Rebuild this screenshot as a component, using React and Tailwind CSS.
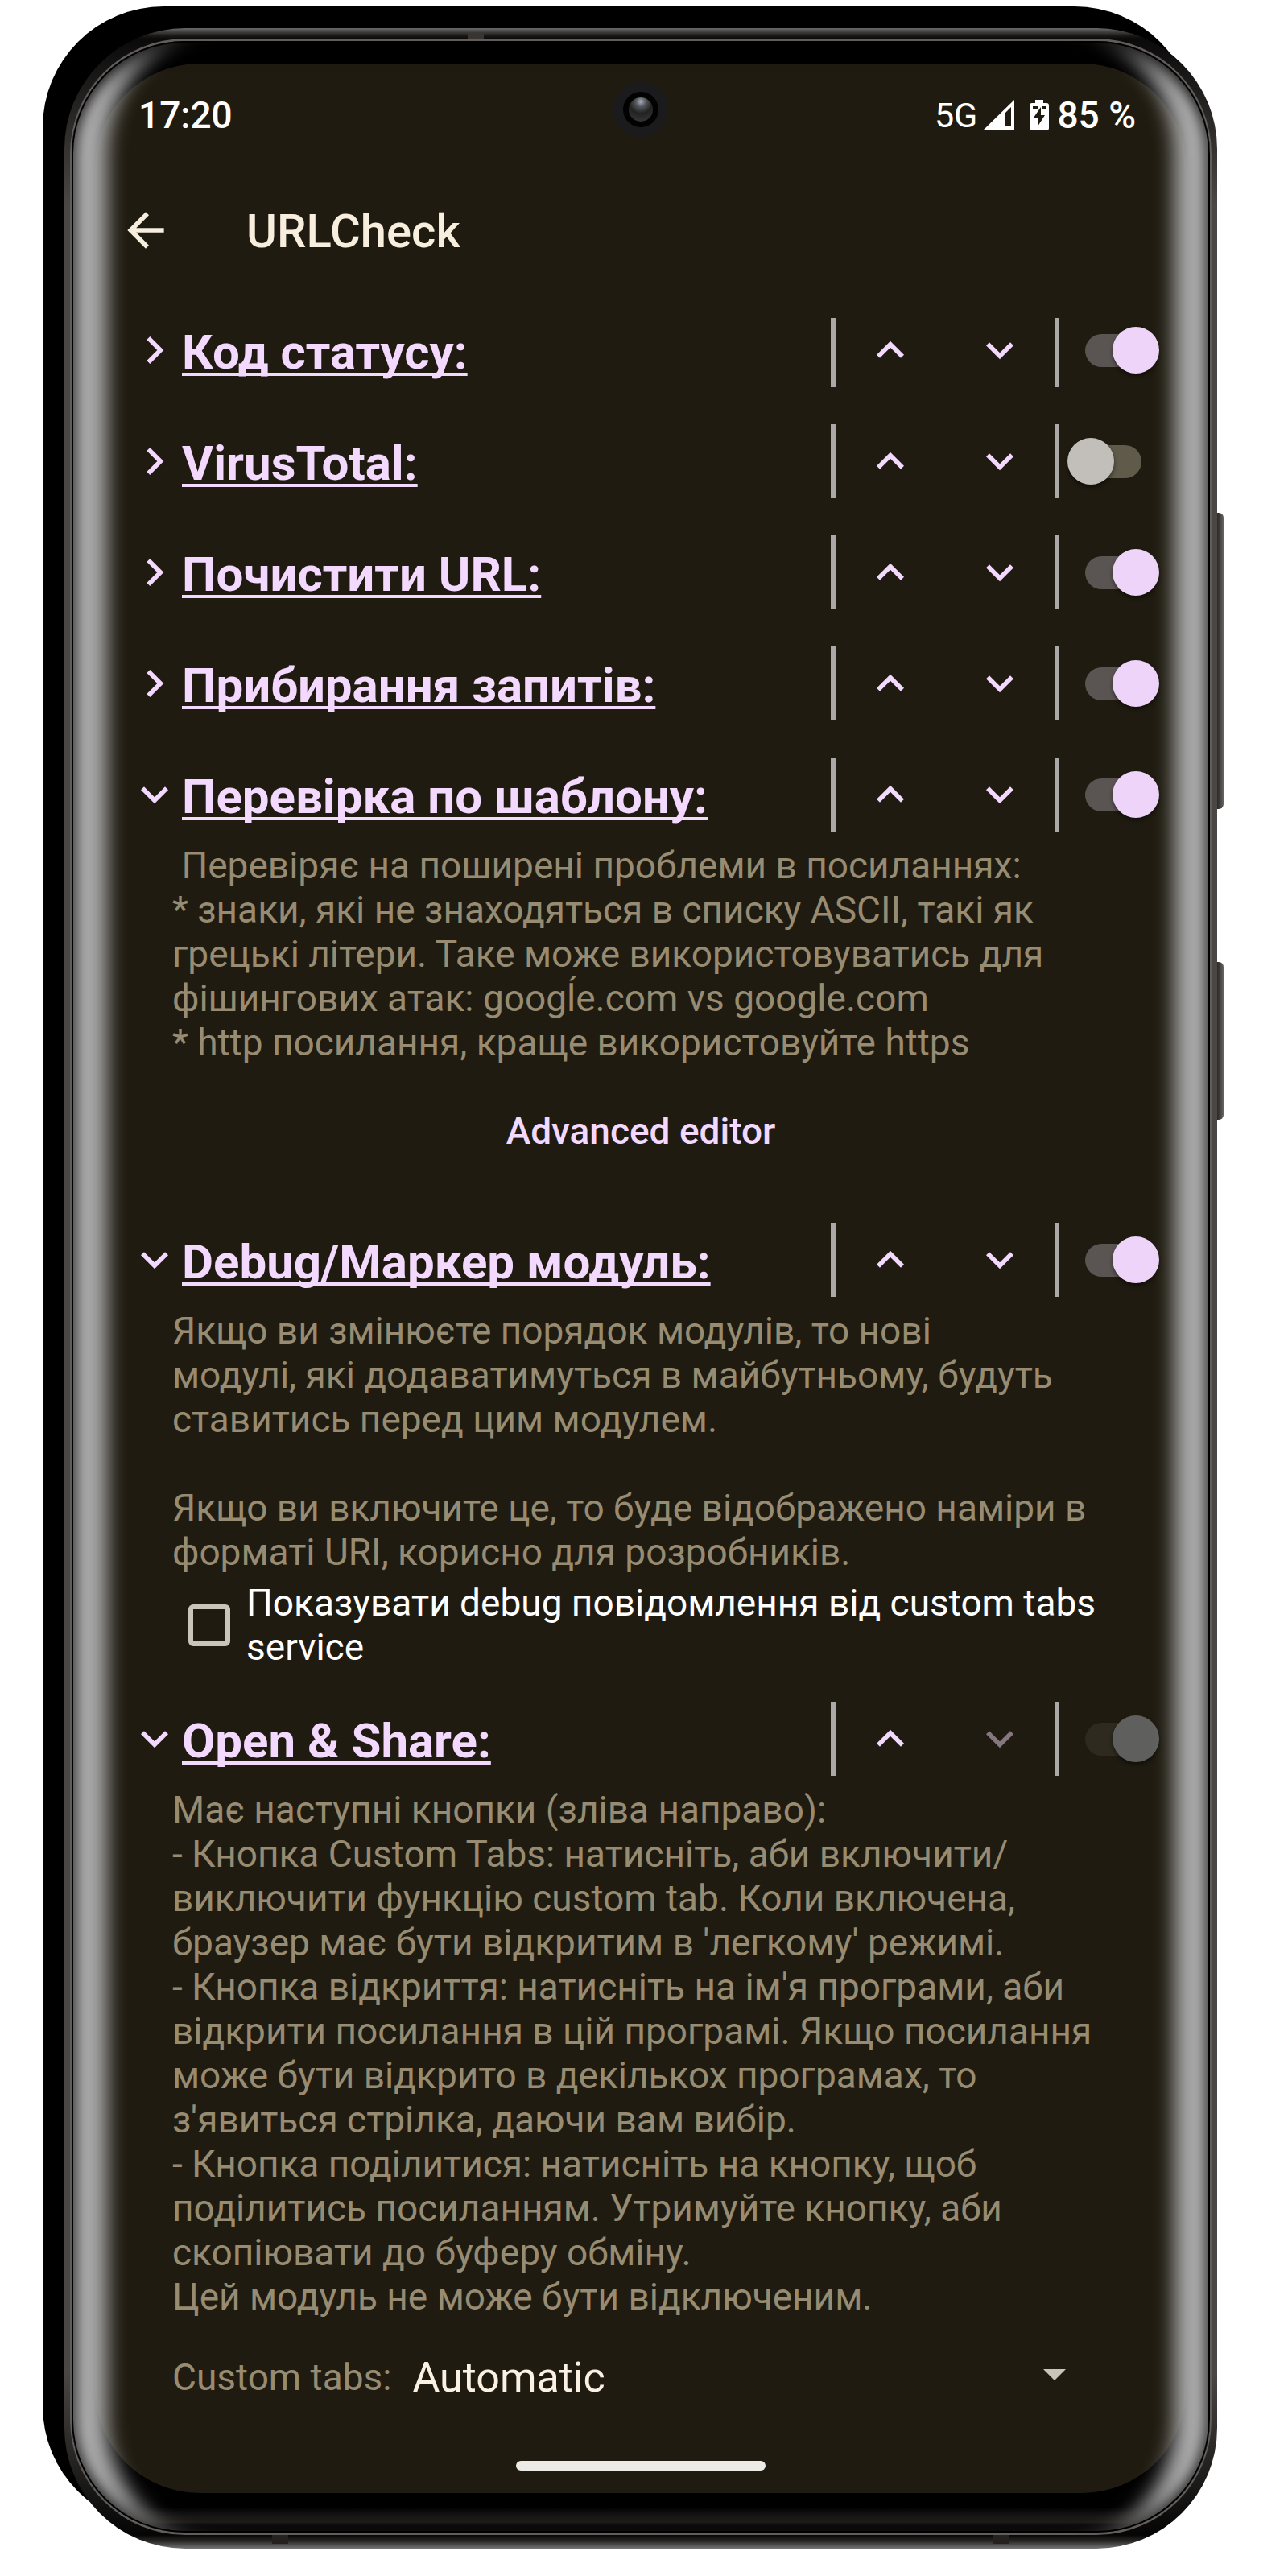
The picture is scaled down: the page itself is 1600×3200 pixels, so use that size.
import React from "react";

const CHEVRONS = {
  right: "M10 6 8.59 7.41 13.17 12l-4.58 4.59L10 18l6-6z",
  down: "M16.59 8.59 12 13.17 7.41 8.59 6 10l6 6 6-6z",
  up: "M12 8l-6 6 1.41 1.41L12 10.83l4.59 4.58L18 14z",
};

function Chevron({ dir }) {
  return (
    <svg viewBox="0 0 24 24" className="size-[68px] shrink-0 fill-current" aria-hidden="true">
      <path d={CHEVRONS[dir]} />
    </svg>
  );
}

function Toggle({ label, on, disabled }) {
  return (
    <input
      type="checkbox"
      role="switch"
      aria-label={label}
      defaultChecked={on}
      disabled={disabled}
      className="relative ml-8 h-[41px] w-[70px] shrink-0 appearance-none self-center rounded-full bg-[#5f5a49] before:absolute before:top-[-9px] before:left-[-22px] before:size-[58px] before:rounded-full before:bg-[#c2bfba] before:shadow-[0_3px_5px_rgba(0,0,0,0.45)] before:content-[''] checked:bg-[#5a5552] checked:before:left-[34px] checked:before:bg-[#eed4f9] disabled:bg-[#2e2a20] disabled:before:bg-[#5f5f5e]"
    />
  );
}

function Module({ title, open, on = true, last, children }) {
  return (
    <section>
      <div className="flex h-[92px] pr-14 pl-10 text-[#f3d9fd]">
        <button type="button" aria-expanded={!!open} className="flex min-w-0 flex-1 items-center text-left">
          <Chevron dir={open ? "down" : "right"} />
          <h2 className="pt-1.5 text-[60px] leading-[70px] font-bold whitespace-nowrap underline decoration-[4px] underline-offset-[5px] [text-decoration-skip-ink:none]">
            {title}
          </h2>
        </button>
        <div className="flex border-x-[6px] border-[#aaa9a7]">
          <button type="button" aria-label={"Вгору: " + title} className="flex w-[136px] items-center justify-center">
            <Chevron dir="up" />
          </button>
          <button
            type="button"
            aria-label={"Вниз: " + title}
            disabled={last}
            className="flex w-[136px] items-center justify-center disabled:text-[#86777f]"
          >
            <Chevron dir="down" />
          </button>
        </div>
        <Toggle label={title} on={on} disabled={last} />
      </div>
      {children}
    </section>
  );
}

function Description({ children }) {
  return (
    <p className="mt-[15px] pl-24 text-[46px] leading-[55px] whitespace-pre text-[#978b71]">{children}</p>
  );
}

const PATTERN_TEXT = ` Перевіряє на поширені проблеми в посиланнях:
* знаки, які не знаходяться в списку ASCII, такі як
грецькі літери. Таке може використовуватись для
фішингових атак: googĺe.com vs google.com
* http посилання, краще використовуйте https`;

const DEBUG_TEXT = `Якщо ви змінюєте порядок модулів, то нові
модулі, які додаватимуться в майбутньому, будуть
ставитись перед цим модулем.

Якщо ви включите це, то буде відображено наміри в
форматі URI, корисно для розробників.`;

const OPEN_TEXT = `Має наступні кнопки (зліва направо):
- Кнопка Custom Tabs: натисніть, аби включити/
виключити функцію custom tab. Коли включена,
браузер має бути відкритим в 'легкому' режимі.
- Кнопка відкриття: натисніть на ім'я програми, аби
відкрити посилання в цій програмі. Якщо посилання
може бути відкрито в декількох програмах, то
з'явиться стрілка, даючи вам вибір.
- Кнопка поділитися: натисніть на кнопку, щоб
поділитись посиланням. Утримуйте кнопку, аби
скопіювати до буферу обміну.
Цей модуль не може бути відключеним.`;

function StatusBar() {
  return (
    <div className="flex h-[128px] items-center justify-between pr-[63px] pl-[54px] text-[46px] leading-[55px] font-medium text-white">
      <span>17:20</span>
      <div className="flex items-center">
        <span className="mr-2 text-[43px] font-normal">5G</span>
        <svg viewBox="0 0 38 38" className="size-[38px]" aria-hidden="true">
          <path fill="#fff" fillRule="evenodd" d="M0 37 38 0v37zM26 17v15h8V9z" />
        </svg>
        <svg viewBox="0 0 24 38" className="mr-2.5 ml-[19px] h-[38px] w-6" aria-hidden="true">
          <path
            fill="#fff"
            fillRule="evenodd"
            d="M7 0h10v4h4q3 0 3 3v28q0 3-3 3H3q-3 0-3-3V7q0-3 3-3h4zM14 9 5 22h5v11l9-14h-5zM4 8v3h6V8zM16 8v3h4V8z"
          />
        </svg>
        <span>85 %</span>
      </div>
    </div>
  );
}

function Screen() {
  return (
    <div className="relative flex flex-col overflow-hidden rounded-[130px] bg-[#1f1b11] pb-7">
      <div className="absolute top-[23px] left-1/2 flex size-[68px] -translate-x-1/2 items-center justify-center rounded-full bg-[#1b1b1d]">
        <div className="flex size-[44px] items-center justify-center rounded-full bg-[#020202]">
          <div className="size-[30px] rounded-full bg-[radial-gradient(circle_at_50%_18%,#a3acbd_0%,#55565a_22%,#222_50%,#3c3c3c_100%)]" />
        </div>
      </div>
      <StatusBar />
      <header className="flex h-[157px] items-center pl-[29px] text-[#f8eede]">
        <button type="button" aria-label="Назад">
          <svg viewBox="0 0 24 24" className="size-[68px] fill-current" aria-hidden="true">
            <path d="M20 11H7.83l5.59-5.59L12 4l-8 8 8 8 1.41-1.41L7.83 13H20z" />
          </svg>
        </button>
        <h1 className="ml-[91px] pt-0.5 text-[58px] leading-[70px] font-medium">URLCheck</h1>
      </header>
      <main className="mt-[31px] overflow-hidden">
        <div className="-mt-1.5 flex flex-col gap-[46px]">
          <Module title="Код статусу:" />
          <Module title="VirusTotal:" on={false} />
          <Module title="Почистити URL:" />
          <Module title="Прибирання запитів:" />
          <Module title="Перевірка по шаблону:" open>
            <Description>{PATTERN_TEXT}</Description>
            <div className="mt-[34px] flex justify-center pb-5">
              <button type="button" className="h-24 px-8 text-[46px] leading-[55px] font-medium text-[#f3d9fd]">
                Advanced editor
              </button>
            </div>
          </Module>
          <Module title="Debug/Маркер модуль:" open>
            <Description>{DEBUG_TEXT}</Description>
            <label className="mt-2 -mb-1.5 flex items-center pl-[116px] text-[46px] leading-[55px] text-white">
              <input
                type="checkbox"
                className="mr-5 size-[52px] shrink-0 appearance-none rounded-[6px] border-[6px] border-[#c9c5b9] checked:bg-[#eed4f9]"
              />
              <span>
                Показувати debug повідомлення від custom tabs
                <br />
                service
              </span>
            </label>
          </Module>
          <Module title="Open &amp; Share:" open last>
            <Description>{OPEN_TEXT}</Description>
          </Module>
        </div>
        <div className="mt-[42px] flex items-center pr-[138px] pl-24">
          <label htmlFor="custom-tabs" className="text-[46px] leading-[55px] text-[#978b71]">
            Custom tabs:
          </label>
          <div className="relative ml-[26px] flex-1">
            <select
              id="custom-tabs"
              className="block w-full appearance-none bg-transparent text-[52px] leading-[61px] text-[#fbf1e3]"
            >
              <option>Automatic</option>
            </select>
            <svg
              viewBox="0 0 28 14"
              className="pointer-events-none absolute top-5 right-3 h-[14px] w-7 fill-[#c9c5b9]"
              aria-hidden="true"
            >
              <path d="M0 0h28L14 14z" />
            </svg>
          </div>
        </div>
      </main>
      <div className="mx-auto mt-[73px] h-3 w-[310px] rounded-full bg-[#ecebe6]" />
    </div>
  );
}

export default function App() {
  return (
    <div className="bg-white pt-2 pr-[115px] pb-[62px] pl-[53px] font-[Roboto,sans-serif]">
      <div className="flow-root rounded-[150px] bg-black pt-[27px] pl-[27px]">
        <div className="relative -mr-[27px] -mb-[27px] rounded-[150px] bg-[linear-gradient(to_bottom,#6a6a68_0,#1c1b1a_9px,#0a0a0a_13px,#4a4846_220px,#4a4846_calc(100%-220px),#050505_calc(100%-17px),#2b2a28_calc(100%-9px),#757575_100%)] px-[7px] pt-[13px] pb-[17px]">
          <div className="absolute top-[602px] -right-2 h-[368px] w-2 rounded-r-md bg-linear-to-r from-[#2c2a28] via-[#454341] to-[#6a6866]" />
          <div className="absolute top-[1160px] -right-2 h-[196px] w-2 rounded-r-md bg-linear-to-r from-[#2c2a28] via-[#454341] to-[#6a6866]" />
          <div className="absolute top-[6px] left-[35%] h-[7px] w-5 bg-[#3b3532]" />
          <div className="absolute bottom-[6px] left-[18%] h-[11px] w-5 bg-[#24211f]" />
          <div className="absolute right-[18%] bottom-[6px] h-[11px] w-5 bg-[#24211f]" />
          <div className="rounded-[143px] border-x-2 border-y-[3px] border-[#625d5b] bg-black">
            <div className="relative overflow-hidden rounded-[140px] bg-[linear-gradient(to_top,#131313_0,#131313_11px,#2b271f_12px,#1b1a1a_20px,#000_32px)] px-[29px] pt-7 pb-[49px]">
              <Screen />
              <div className="pointer-events-none absolute inset-0 rounded-[140px] shadow-[inset_0_0_0_2px_#000,inset_0_30px_20px_-16px_rgba(0,0,0,0.7),inset_0_-30px_20px_-16px_rgba(0,0,0,0.5),inset_16px_0_14px_-8px_rgba(60,60,62,0.8),inset_-16px_0_14px_-8px_rgba(60,60,62,0.8),inset_68px_0_25px_-24px_#ababab,inset_-68px_0_25px_-24px_#ababab]" />
            </div>
          </div>
        </div>
      </div>
    </div>
  );
}
